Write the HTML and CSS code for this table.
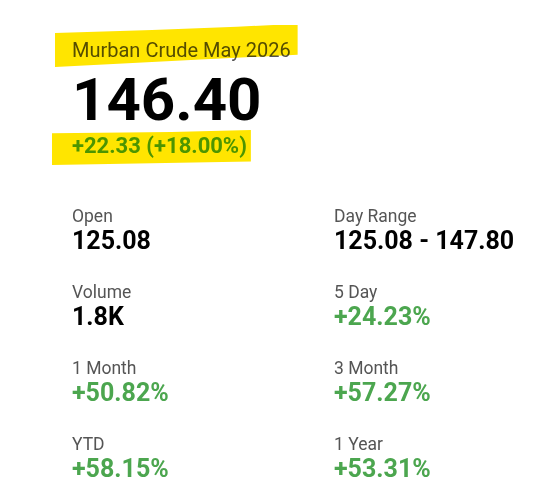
FILE: index.html
```html
<!DOCTYPE html>
<html lang="en">
<head>
<meta charset="utf-8">
<title>Murban Crude May 2026</title>
<link rel="stylesheet" href="styles.css">
</head>
<body>
<main class="quote">
  <header class="quote-head">
    <div class="title"><span class="mark mark-title">Murban Crude May 2026</span></div>
    <div class="price">146.40</div>
    <div class="change"><span class="mark mark-change">+22.33 (+18.00%)</span></div>
  </header>
  <section class="stats">
    <div class="stat"><div class="label">Open</div><div class="value">125.08</div></div>
    <div class="stat"><div class="label">Day Range</div><div class="value">125.08 - 147.80</div></div>
    <div class="stat"><div class="label">Volume</div><div class="value">1.8K</div></div>
    <div class="stat"><div class="label">5 Day</div><div class="value up">+24.23%</div></div>
    <div class="stat"><div class="label">1 Month</div><div class="value up">+50.82%</div></div>
    <div class="stat"><div class="label">3 Month</div><div class="value up">+57.27%</div></div>
    <div class="stat"><div class="label">YTD</div><div class="value up">+58.15%</div></div>
    <div class="stat"><div class="label">1 Year</div><div class="value up">+53.31%</div></div>
  </section>
</main>
</body>
</html>
```

FILE: styles.css
```css
html { background: #fff; }
body {
  margin: 0;
  font-family: Roboto, "Liberation Sans", Arial, sans-serif;
  color: #000;
}
.quote {
  padding: 38px 0 0 72px;
}
.quote-head {
  display: flex;
  flex-direction: column;
  align-items: flex-start;
}
.title {
  font-size: 20px;
  line-height: 24px;
  color: #555;
}
.price {
  margin-top: 6px;
  font-size: 60px;
  line-height: 64px;
  font-weight: 700;
  color: #000;
}
.change {
  margin-top: 1px;
  font-size: 22px;
  line-height: 26px;
  font-weight: 700;
  color: #4ca64f;
}
.mark {
  position: relative;
  display: inline-block;
}
.mark::after {
  content: "";
  position: absolute;
  background: #ffe500;
  mix-blend-mode: multiply;
  pointer-events: none;
}
.mark-title::after {
  left: -17px;
  right: -7px;
  top: -13px;
  height: 42px;
  clip-path: polygon(0 19%, 40% 12%, 75% 4%, 90% 0, 100% 0, 100% 71%, 60% 82%, 0 100%);
}
.mark-change::after {
  left: -20px;
  right: -4px;
  top: -3px;
  height: 35px;
  clip-path: polygon(0 9%, 60% 6%, 100% 0, 100% 90%, 50% 95%, 0 100%);
}
.stats {
  display: grid;
  grid-template-columns: 262px 1fr;
  row-gap: 26px;
  margin-top: 47px;
}
.label {
  font-size: 17.5px;
  line-height: 20px;
  color: #555;
}
.value {
  font-size: 25px;
  line-height: 30px;
  font-weight: 700;
  color: #000;
}
.value.up {
  color: #4ca64f;
}
```
